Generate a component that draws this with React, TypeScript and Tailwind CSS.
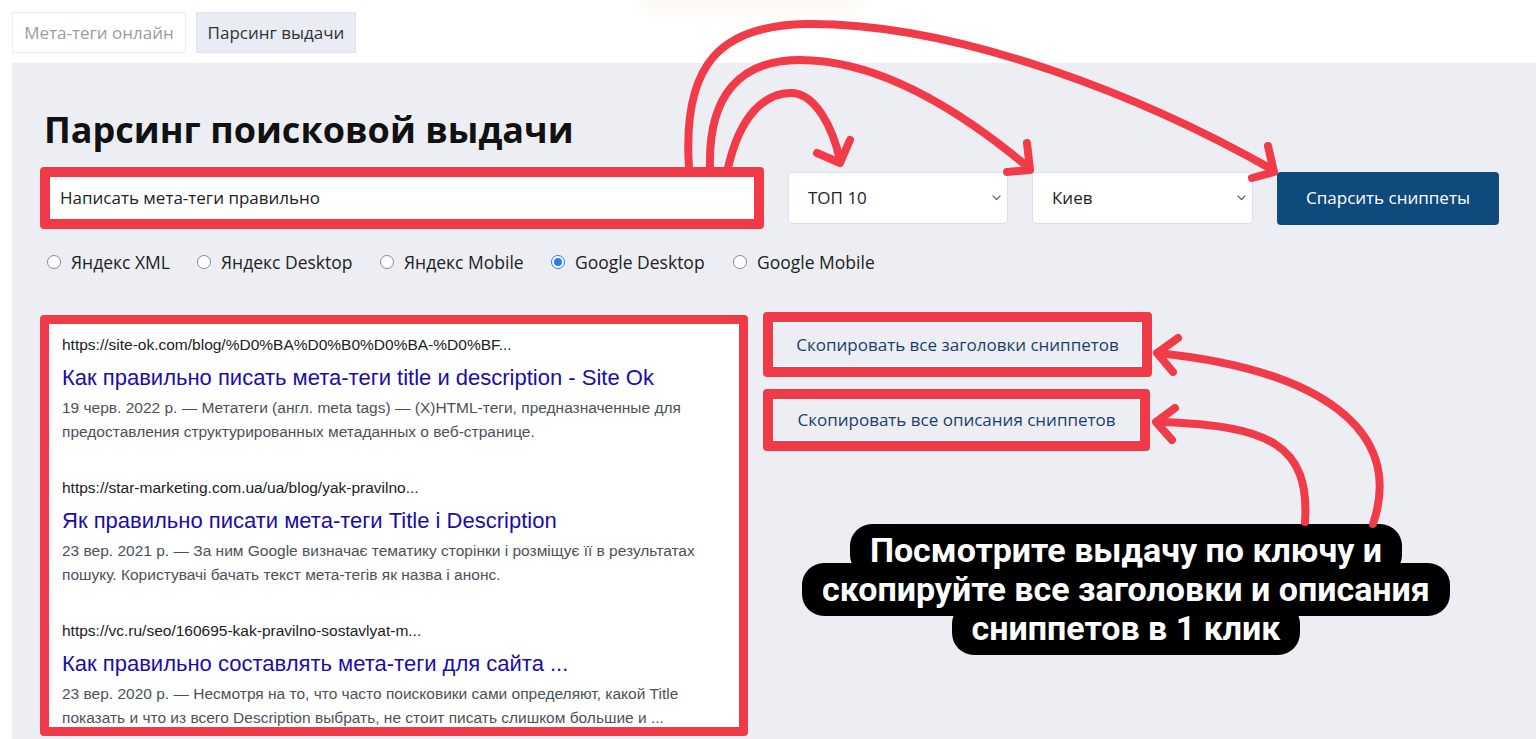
import React from "react";

const results = [
  {
    url: "https://site-ok.com/blog/%D0%BA%D0%B0%D0%BA-%D0%BF...",
    title: "Как правильно писать мета-теги title и description - Site Ok",
    desc: "19 черв. 2022 р. — Метатеги (англ. meta tags) — (X)HTML-теги, предназначенные для предоставления структурированных метаданных о веб-странице.",
  },
  {
    url: "https://star-marketing.com.ua/ua/blog/yak-pravilno...",
    title: "Як правильно писати мета-теги Title і Description",
    desc: "23 вер. 2021 р. — За ним Google визначає тематику сторінки і розміщує її в результатах пошуку. Користувачі бачать текст мета-тегів як назва і анонс.",
  },
  {
    url: "https://vc.ru/seo/160695-kak-pravilno-sostavlyat-m...",
    title: "Как правильно составлять мета-теги для сайта ...",
    desc: "23 вер. 2020 р. — Несмотря на то, что часто поисковики сами определяют, какой Title показать и что из всего Description выбрать, не стоит писать слишком большие и ...",
  },
];

const engines = [
  { label: "Яндекс XML", w: "w-[150px]" },
  { label: "Яндекс Desktop", w: "w-[183px]" },
  { label: "Яндекс Mobile", w: "w-[171px]" },
  { label: "Google Desktop", w: "w-[182px]", checked: true },
  { label: "Google Mobile", w: "w-[160px]" },
];

const callout = ["Посмотрите выдачу по ключу и", "скопируйте все заголовки и описания", "сниппетов в 1 клик"];

function Chevron() {
  return (
    <svg width="9" height="6" viewBox="0 0 9 6" fill="none" className="shrink-0">
      <path d="M1 1l3.5 3.5L8 1" stroke="#666" strokeWidth="1.2" strokeLinecap="round" strokeLinejoin="round" />
    </svg>
  );
}

function Select({ value, w }: { value: string; w: string }) {
  return (
    <div className={`flex h-[52px] ${w} items-center justify-between rounded-[4px] border border-[#dde0e6] bg-white pl-[19px] pr-[6px] text-[17px] text-[#222]`}>
      <span>{value}</span>
      <Chevron />
    </div>
  );
}

function Radio({ label, checked, w }: { label: string; checked?: boolean; w: string }) {
  return (
    <div className={`flex ${w} items-center gap-[10px]`}>
      {checked ? (
        <span className="flex h-[14px] w-[14px] items-center justify-center rounded-full border border-[#2f7de1] bg-white">
          <span className="h-[8px] w-[8px] rounded-full bg-[#2f7de1]" />
        </span>
      ) : (
        <span className="h-[14px] w-[14px] rounded-full border border-[#8a8a8a] bg-white" />
      )}
      <span className="text-[17.5px] text-[#222]">{label}</span>
    </div>
  );
}

function Annotations() {
  const s = { stroke: "#f23b49", strokeWidth: 8, fill: "none", strokeLinecap: "round" as const, strokeLinejoin: "round" as const };
  return (
    <svg className="pointer-events-none absolute left-0 top-0" width="1536" height="739" viewBox="0 0 1536 739">
      {/* to button */}
      <path {...s} d="M689,168 C682,62 722,26 805,24 C960,22 1150,100 1273,170" />
      <path {...s} d="M1268,146 L1274,172 L1252,178" />
      {/* to city */}
      <path {...s} d="M710,168 C708,95 740,60 800,60 C880,60 960,110 1029,168" />
      <path {...s} d="M1027,143 L1030,170 L1007,172" />
      {/* to top */}
      <path {...s} d="M728,168 C740,115 765,92 793,93 C815,95 832,125 840,160" />
      <path {...s} d="M850,140 L840,163 L817,153" />
      {/* back to copy buttons */}
      <path {...s} d="M1373,524 C1405,430 1320,370 1158,353" />
      <path {...s} d="M1178,338 L1157,353 L1173,372" />
      <path {...s} d="M1305,522 C1310,445 1270,425 1158,422" />
      <path {...s} d="M1175,408 L1156,422 L1172,440" />
    </svg>
  );
}

export default function App() {
  return (
    <div className="relative h-[739px] w-[1536px] overflow-hidden bg-white font-['Open_Sans',sans-serif]">
      <div className="pointer-events-none absolute left-[640px] top-[-14px] h-[26px] w-[220px] rounded-full bg-[#f7f1e4] opacity-50 blur-[8px]" />

      {/* tabs */}
      <div className="flex gap-[10px] pl-[12px] pt-[12px]">
        <div className="flex h-[41px] w-[174px] items-center justify-center border border-[#eceef2] bg-white text-[17px] text-[#9c9c9c]">
          Мета-теги онлайн
        </div>
        <div className="flex h-[41px] w-[160px] items-center justify-center border border-[#e0e4ec] bg-[#e9ecf4] text-[17px] text-[#333]">
          Парсинг выдачи
        </div>
      </div>

      {/* panel */}
      <div className="ml-[12px] mt-[10px] h-[700px] bg-[#eceef4] pl-[28px] pt-[45px]">
        <h1 className="ml-[4px] text-[36px] font-bold leading-[44px] text-[#111]">Парсинг поисковой выдачи</h1>

        <div className="mt-[15px] flex items-center">
          <div className="h-[62px] w-[724px] rounded-[4px] border-[10px] border-[#f03a47] bg-white">
            <div className="flex h-full items-center pl-[10px] text-[17px] text-[#222]">Написать мета-теги правильно</div>
          </div>
          <div className="ml-[24px] flex items-center gap-[24px]">
            <Select value="ТОП 10" w="w-[220px]" />
            <Select value="Киев" w="w-[221px]" />
            <button className="h-[53px] w-[222px] rounded-[4px] bg-[#0f4a7c] text-[17px] font-medium text-white">
              Спарсить сниппеты
            </button>
          </div>
        </div>

        <div className="ml-[7px] mt-[22px] flex h-[22px] items-center">
          {engines.map((e) => (
            <Radio key={e.label} label={e.label} checked={e.checked} w={e.w} />
          ))}
        </div>

        <div className="mt-[42px] flex items-start">
          <div className="h-[421px] w-[708px] overflow-hidden rounded-[4px] border-[9px] border-[#f03a47] bg-white pl-[13px] pr-[20px] pt-[11px] font-['Liberation_Sans',Arial,sans-serif]">
            {results.map((r) => (
              <div key={r.url} className="mb-[34px]">
                <div className="text-[15.5px] leading-[20px] text-[#202124]">{r.url}</div>
                <div className="mt-[10px] text-[22px] leading-[26px] text-[#1a0dab]">{r.title}</div>
                <div className="mt-[5px] text-[15.5px] leading-[24px] text-[#4d5156]">{r.desc}</div>
              </div>
            ))}
          </div>

          <div className="ml-[15px] -mt-[3px] flex flex-col gap-[12px]">
            <div className="h-[65px] w-[389px] rounded-[4px] border-[10px] border-[#f03a47] bg-[#f2f3f6]">
              <div className="flex h-full items-center justify-center border border-white bg-[#eceef3] text-[17px] text-[#1b3f6a]">
                Скопировать все заголовки сниппетов
              </div>
            </div>
            <div className="h-[62px] w-[387px] rounded-[4px] border-[10px] border-[#f03a47] bg-[#f2f3f6]">
              <div className="flex h-full items-center justify-center border border-white bg-[#eceef3] text-[17px] text-[#1b3f6a]">
                Скопировать все описания сниппетов
              </div>
            </div>
          </div>
        </div>
      </div>

      {/* callout */}
      <div className="absolute left-[726px] top-[524px] flex w-[800px] flex-col items-center font-['Roboto',sans-serif] text-[34px] font-bold text-white">
        {callout.map((line, i) => (
          <div key={line} className={`rounded-[22px] bg-black px-[20px] leading-[53px] ${i > 0 ? "-mt-[14px]" : ""}`}>
            <span className="relative z-10">{line}</span>
          </div>
        ))}
      </div>

      <Annotations />
    </div>
  );
}
